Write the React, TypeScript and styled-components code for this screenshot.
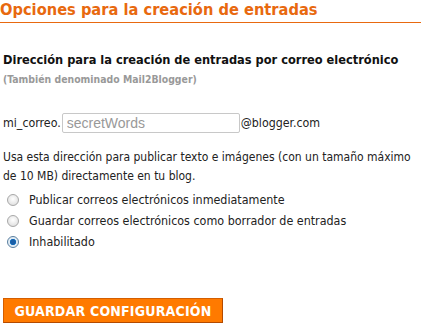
import { createGlobalStyle, styled } from 'styled-components';

const GlobalStyle = createGlobalStyle`
  html, body {
    margin: 0;
    padding: 0;
    background: #ffffff;
  }
  body {
    font-family: "DejaVu Sans Condensed", "DejaVu Sans", sans-serif;
    color: #222;
  }
`;

const Page = styled.div`
  width: 421px;
  height: 327px;
  overflow: hidden;
`;

const Title = styled.h2`
  margin: 0;
  padding: 0 0 3px 0;
  font-size: 16.3px;
  font-weight: bold;
  color: #e8690f;
  line-height: 19px;
  border-bottom: 1px solid #e8690f;
`;

const Section = styled.div`
  padding: 0 3px;
`;

const Heading = styled.h3`
  margin: 29px 0 0 0;
  font-size: 12.7px;
  font-weight: bold;
  color: #111;
  line-height: 16px;
`;

const Note = styled.div`
  font-size: 10.4px;
  font-weight: bold;
  color: #999;
  line-height: 14px;
  margin-top: 4px;
`;

const EmailRow = styled.div`
  display: flex;
  align-items: center;
  margin-top: 27px;
  font-size: 12.3px;
  color: #222;
`;

const EmailInput = styled.input`
  width: 178px;
  height: 20px;
  box-sizing: border-box;
  margin: 0 1px 0 1px;
  padding: 2px 4px;
  border: 1px solid #c8c8c8;
  border-radius: 2px;
  font-family: "Liberation Sans", Arial, sans-serif;
  font-size: 14px;
  color: #333;
  outline: none;
  &::placeholder {
    color: #999;
  }
`;

const Help = styled.p`
  margin: 15px 0 0 0;
  font-size: 12px;
  line-height: 19px;
  color: #222;
`;

const Options = styled.div`
  display: flex;
  flex-direction: column;
  gap: 4px;
  margin-top: 5px;
`;

const Option = styled.label`
  display: flex;
  align-items: center;
  gap: 10px;
  font-size: 12.4px;
  line-height: 17px;
  color: #222;
  padding-left: 4px;
`;

const Radio = styled.span<{ $checked?: boolean }>`
  width: 12px;
  height: 12px;
  border-radius: 50%;
  box-sizing: border-box;
  border: 1px solid ${(p) => (p.$checked ? '#5a7fa0' : '#a8a8a8')};
  background: ${(p) =>
    p.$checked
      ? 'radial-gradient(circle, #1a5fa8 0 2.5px, #2d8ed8 3px, #dceaf5 3.5px, #f2f2f2 100%)'
      : 'radial-gradient(circle at 50% 40%, #ffffff 0, #e4e4e4 70%, #cfcfcf 100%)'};
  flex: none;
`;

const Button = styled.button`
  margin-top: 48px;
  width: 220px;
  height: 25px;
  background: #ff7a00;
  border: 1px solid #b44a00;
  border-top-color: #d45e00;
  border-left-color: #d45e00;
  color: #ffffff;
  font-family: "DejaVu Sans Condensed", "DejaVu Sans", sans-serif;
  font-size: 14px;
  font-weight: bold;
  letter-spacing: 0.2px;
  padding: 0;
  cursor: pointer;
`;

const App = () => {
  return (
    <Page>
      <GlobalStyle />
      <Title>Opciones para la creación de entradas</Title>
      <Section>
        <Heading>Dirección para la creación de entradas por correo electrónico</Heading>
        <Note>(También denominado Mail2Blogger)</Note>
        <EmailRow>
          <span>mi_correo.</span>
          <EmailInput placeholder="secretWords" />
          <span>@blogger.com</span>
        </EmailRow>
        <Help>
          Usa esta dirección para publicar texto e imágenes (con un tamaño máximo de 10 MB) directamente en tu blog.
        </Help>
        <Options>
          <Option>
            <Radio />
            Publicar correos electrónicos inmediatamente
          </Option>
          <Option>
            <Radio />
            Guardar correos electrónicos como borrador de entradas
          </Option>
          <Option>
            <Radio $checked />
            Inhabilitado
          </Option>
        </Options>
        <Button>GUARDAR CONFIGURACIÓN</Button>
      </Section>
    </Page>
  );
};

export default App;
